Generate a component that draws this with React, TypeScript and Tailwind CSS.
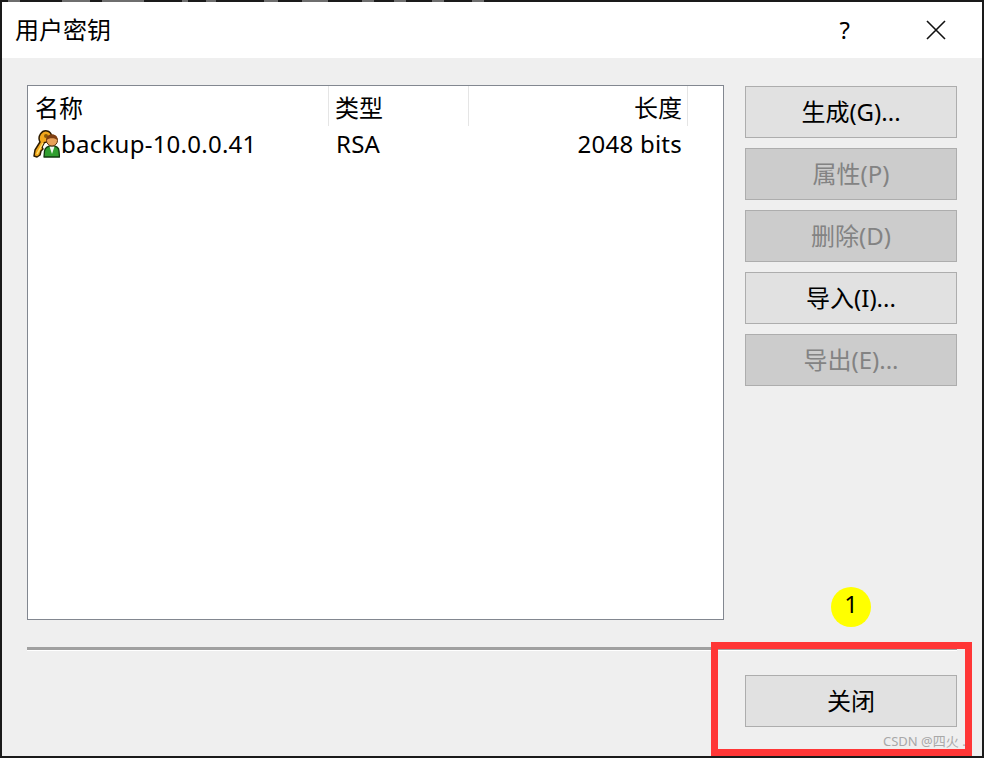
const cjk = "font-['Noto_Sans','Noto_Sans_CJK_SC',sans-serif]";

const UserKeyIcon = () => (
  <svg width="27" height="28" viewBox="0 0 27 28" className="shrink-0">
    {/* key */}
    <path d="M1 26 L2 20 L7 12 C4 6 9 0 14 1 C19 2 20 8 16 11 C14 12.5 12 12.5 11.5 12.5 L9 17 L10 19 L8 21 L7 25 L4 27 Z" fill="#f2a81c" stroke="#2e1c00" strokeWidth="1.5" strokeLinejoin="round" />
    <path d="M4 24 L10 13" stroke="#ffdf70" strokeWidth="1.5" fill="none" />
    <circle cx="13" cy="6" r="2" fill="#8a5a08" />
    {/* person */}
    <path d="M11 27 L11.5 21 C12 17.5 15 16 19 16 C23 16 26 17.5 26 21 L26.5 27 Z" fill="#2f9e2f" stroke="#0f3a0f" strokeWidth="1.3" strokeLinejoin="round" />
    <path d="M16.5 16.5 L19 24 L21.5 16.5 Z" fill="#f2f7f2" />
    <circle cx="19" cy="10.5" r="5.5" fill="#e8a25a" stroke="#5e3410" strokeWidth="1" />
    <path d="M13.5 10 C13 6 16 4.5 19 4.5 C22 4.5 25 6 24.5 10 C22 7.5 16 7.5 13.5 10 Z" fill="#7f3f12" />
  </svg>
);

const ActionButton = ({ label, disabled }: { label: string; disabled?: boolean }) => (
  <div className={`flex h-[52px] w-[212px] items-center justify-center border border-[#adadad] text-2xl ${disabled ? "bg-[#cccccc] text-[#838383]" : "bg-[#e1e1e1] text-black"}`}>
    {label}
  </div>
);

const App = () => {
  return (
    <div className={`relative flex h-[758px] w-[984px] flex-col overflow-hidden bg-[#1a1a1a] px-[2px] pb-[2px] text-black ${cjk}`}>
      {/* leftovers of what sits behind the dialog, cut by the top edge */}
      <svg width="980" height="2" className="shrink-0" stroke="#6e6e6e" strokeWidth="2">
        <path d="M6 1 H18 M60 1 H88 M100 1 H142 M180 1 H186 M204 1 H214 M262 1 H276 M300 1 H326 M360 1 H372 M392 1 H404 M430 1 H442 M470 1 H482" />
      </svg>

      <div className="flex h-[56px] shrink-0 items-center justify-between bg-white pl-[13px] pr-[36px]">
        <span className="text-2xl">用户密钥</span>
        <div className="flex items-center gap-[76px]">
          <span className="text-2xl">?</span>
          <svg width="20" height="20" viewBox="0 0 20 20" fill="none" stroke="#111" strokeWidth="1.6">
            <path d="M1 1 L19 19 M19 1 L1 19" />
          </svg>
        </div>
      </div>

      <div className="flex flex-1 flex-col bg-[#efefef] px-[25px] pt-[27px]">
        <div className="flex gap-[21px]">
          <div className="h-[535px] w-[697px] border border-[#828790] bg-white text-2xl">
            <div className="flex h-[40px]">
              <div className="w-[301px] border-r border-[#e5e5e5] pl-[7px] pt-[6px]">名称</div>
              <div className="w-[140px] border-r border-[#e5e5e5] pl-[6px] pt-[6px]">类型</div>
              <div className="w-[219px] border-r border-[#e5e5e5] pr-[5px] pt-[6px] text-right">长度</div>
            </div>
            <div className="flex h-[36px] items-center tracking-[0.25px]">
              <div className="flex w-[301px] items-center pl-[5px]">
                <UserKeyIcon />
                <span className="ml-[1px]">backup-10.0.0.41</span>
              </div>
              <div className="w-[140px] pl-[7px]">RSA</div>
              <div className="w-[219px] pr-[6px] text-right">2048 bits</div>
            </div>
          </div>
          <div className="flex flex-col gap-[10px] pt-[1px]">
            <ActionButton label="生成(G)..." />
            <ActionButton label="属性(P)" disabled />
            <ActionButton label="删除(D)" disabled />
            <ActionButton label="导入(I)..." />
            <ActionButton label="导出(E)..." disabled />
          </div>
        </div>

        <div className="mt-[27px] h-[4px] border-b border-white bg-[#a0a0a0]" />

        <div className="mt-[24px] flex justify-end">
          <ActionButton label="关闭" />
        </div>
      </div>

      {/* annotations over the dialog */}
      <div className="absolute left-[831px] top-[587px] flex h-[40px] w-[40px] items-center justify-center rounded-full bg-[#ffff00] pb-[6px] text-2xl">1</div>
      <div className="absolute left-[711px] top-[642px] h-[114px] w-[261px] border-[7px] border-[#ff3636]" />
      <div className="absolute left-[883px] top-[732px] whitespace-pre text-[13px] text-[#a8a8a8]">CSDN @四火 .</div>
    </div>
  );
};

export default App;
